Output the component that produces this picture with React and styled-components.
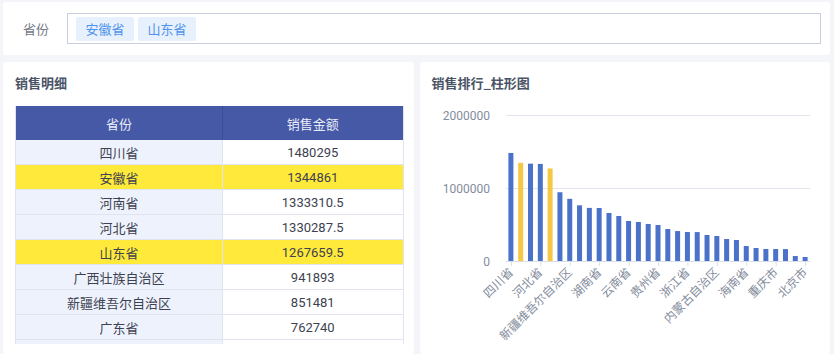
import styled, { createGlobalStyle } from "styled-components";

const GlobalStyle = createGlobalStyle`
	html, body {
		margin: 0;
		padding: 0;
		background: #f4f5f9;
		font-family: "Noto Sans CJK SC", "Noto Sans", sans-serif;
	}
`;

const Page = styled.div`
	width: 834px;
	height: 354px;
	box-sizing: border-box;
	padding: 2px 4px 0 3px;
	display: flex;
	flex-direction: column;
	gap: 7px;
	overflow: hidden;
`;

const FilterBar = styled.div`
	height: 53px;
	flex-shrink: 0;
	background: #fff;
	border-radius: 3px;
	display: flex;
	align-items: center;
	padding: 0 9px 0 20px;
`;

const FilterLabel = styled.div`
	width: 44px;
	font-size: 13px;
	color: #737986;
`;

const InputBox = styled.div`
	flex: 1;
	height: 31px;
	box-sizing: border-box;
	border: 1px solid #c9cde0;
	display: flex;
	align-items: center;
	gap: 4px;
	padding: 0 8px;
`;

const Tag = styled.span`
	width: 58px;
	height: 24px;
	border-radius: 2px;
	background: #e7f0fd;
	color: #4f93ea;
	font-size: 13px;
	display: flex;
	align-items: center;
	justify-content: center;
`;

const Row = styled.div`
	flex: 1;
	display: flex;
	gap: 6px;
	min-height: 0;
`;

const Card = styled.div`
	flex: 1;
	background: #fff;
	border-radius: 3px;
	padding: 12px 10px 0 12px;
	display: flex;
	flex-direction: column;
	min-width: 0;
`;

const Title = styled.div`
	font-size: 13px;
	line-height: 18px;
	font-weight: 700;
	color: #4b5466;
	margin-bottom: ${(p) => p.gap}px;
`;

const TableWrap = styled.div`
	height: 238px;
	flex-shrink: 0;
	overflow: hidden;
	border-left: 1px solid #dfe4ee;
	border-right: 1px solid #dfe4ee;
	font-size: 13px;
	font-family: "Roboto", "Noto Sans CJK SC", sans-serif;
`;

const TRow = styled.div`
	display: grid;
	grid-template-columns: 206px 1fr;
	height: ${(p) => (p.head ? 34 : 25)}px;
	box-sizing: border-box;
	border-bottom: ${(p) => (p.head ? "none" : "1px solid #dfe4ee")};
	background: ${(p) => (p.head ? "#4659a6" : p.hl ? "#ffe93a" : "#fff")};
	color: ${(p) => (p.head ? "#e9edf8" : "#3d4250")};
`;

const Cell = styled.div`
	display: flex;
	align-items: center;
	justify-content: center;
	background: ${(p) => (p.first && !p.hl && !p.head ? "#eef2fd" : "transparent")};
	border-left: ${(p) => (p.first ? "none" : p.head ? "1px solid #3a4d97" : "1px solid #dfe4ee")};
`;

const ChartSvg = styled.svg`
	display: block;
	overflow: visible;
	font-family: "Roboto", "Noto Sans CJK SC", sans-serif;
`;

const rows = [
	["四川省", "1480295"],
	["安徽省", "1344861", true],
	["河南省", "1333310.5"],
	["河北省", "1330287.5"],
	["山东省", "1267659.5", true],
	["广西壮族自治区", "941893"],
	["新疆维吾尔自治区", "851481"],
	["广东省", "762740"],
	["", ""],
];

const bars = [
	["四川省", 1480295],
	["安徽省", 1344861, true],
	["河南省", 1333310.5],
	["河北省", 1330287.5],
	["山东省", 1267659.5, true],
	["广西壮族自治区", 941893],
	["新疆维吾尔自治区", 851481],
	["广东省", 762740],
	["江苏省", 727410],
	["湖南省", 726000],
	["湖北省", 658000],
	["江西省", 616000],
	["云南省", 548000],
	["福建省", 534000],
	["黑龙江省", 507000],
	["贵州省", 493000],
	["辽宁省", 438000],
	["陕西省", 410000],
	["浙江省", 397000],
	["山西省", 396000],
	["吉林省", 356000],
	["内蒙古自治区", 342000],
	["甘肃省", 301000],
	["上海市", 288000],
	["海南省", 205000],
	["天津市", 178000],
	["宁夏回族自治区", 165000],
	["重庆市", 164000],
	["青海省", 163000],
	["西藏自治区", 68000],
	["北京市", 55000],
];

// plot area in svg coords (svg origin = page x 433, y 100)
const X0 = 74;
const X1 = 378;
const Y0 = 161;
const PX_PER_M = 73;
const step = (X1 - X0) / bars.length;

const BarChart = () => (
	<ChartSvg width="390" height="254">
		{[0, 1, 2].map((k) => {
			const y = Y0 - k * PX_PER_M;
			return (
				<g key={k}>
					<line x1={X0} x2={X1} y1={y + 0.5} y2={y + 0.5} stroke={k === 0 ? "#d9dde6" : "#e3e5ee"} />
					<text x={58} y={y + 4.5} fontSize="12" fill="#838c9c" textAnchor="end">
						{k * 1000000}
					</text>
				</g>
			);
		})}
		{bars.map(([name, v, hl], i) => {
			const cx = X0 + (i + 0.5) * step;
			const h = (v / 1000000) * PX_PER_M;
			return <rect key={name} x={cx - 2.5} y={Y0 - h} width="5" height={h} fill={hl ? "#f5c843" : "#4a72c8"} />;
		})}
		{bars.map(([name], i) => {
			if (i % 3 !== 0) return null;
			const cx = X0 + (i + 0.5) * step;
			return (
				<g key={name}>
					<line x1={cx + 0.5} x2={cx + 0.5} y1={Y0} y2={Y0 + 5} stroke="#d9dde6" />
					<text
						x={cx + 3}
						y={Y0 + 12}
						fontSize="12"
						fill="#838c9c"
						textAnchor="end"
						transform={`rotate(-45 ${cx + 3} ${Y0 + 12})`}
					>
						{name}
					</text>
				</g>
			);
		})}
	</ChartSvg>
);

const App = () => {
	return (
		<Page>
			<GlobalStyle />
			<FilterBar>
				<FilterLabel>省份</FilterLabel>
				<InputBox>
					<Tag>安徽省</Tag>
					<Tag>山东省</Tag>
				</InputBox>
			</FilterBar>
			<Row>
				<Card>
					<Title gap={14}>销售明细</Title>
					<TableWrap>
						<TRow head>
							<Cell first head>
								省份
							</Cell>
							<Cell head>销售金额</Cell>
						</TRow>
						{rows.map(([p, v, hl], i) => (
							<TRow key={i} hl={hl}>
								<Cell first hl={hl}>
									{p}
								</Cell>
								<Cell hl={hl}>{v}</Cell>
							</TRow>
						))}
					</TableWrap>
				</Card>
				<Card>
					<Title gap={8}>销售排行_柱形图</Title>
					<BarChart />
				</Card>
			</Row>
		</Page>
	);
};

export default App;
